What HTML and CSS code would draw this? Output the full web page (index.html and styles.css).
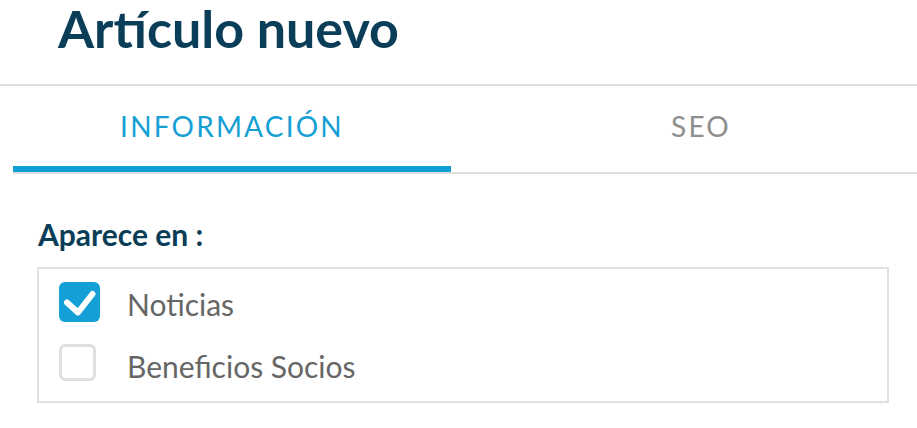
FILE: index.html
```html
<!DOCTYPE html>
<html lang="es">
<head>
<meta charset="utf-8">
<title>Artículo nuevo</title>
<link rel="stylesheet" href="styles.css">
</head>
<body>
<div class="page">
  <header class="header">
    <h1 class="title">Artículo nuevo</h1>
  </header>
  <nav class="tabs">
    <div class="tab tab-info active">INFORMACIÓN</div>
    <div class="tab tab-seo">SEO</div>
  </nav>
  <section class="content">
    <div class="label">Aparece en :</div>
    <div class="box">
      <label class="row">
        <span class="cb-wrap">
          <span class="cb checked">
            <svg width="41" height="40" viewBox="0 0 41 40"><path d="M8 20.5 L19 30.5 L33.5 12" fill="none" stroke="#fff" stroke-width="6" stroke-linecap="round" stroke-linejoin="round"/></svg>
          </span>
        </span>
        <span class="text">Noticias</span>
      </label>
      <label class="row">
        <span class="cb-wrap"><span class="cb"></span></span>
        <span class="text">Beneficios Socios</span>
      </label>
    </div>
  </section>
</div>
</body>
</html>
```
FILE: styles.css
```css
* { box-sizing: border-box; }
html, body { margin: 0; padding: 0; background: #fff; }
body { font-family: Lato, "Open Sans", sans-serif; overflow: hidden; width: 917px; height: 428px; }
.page { width: 917px; }
.header {
  height: 86px;
  padding: 2px 0 0 58px;
  border-bottom: 2px solid #dedede;
}
.title {
  margin: 0;
  font-size: 52px;
  line-height: 1;
  font-weight: 700;
  color: #0a3d57;
}
.tabs {
  display: flex;
  margin-left: 13px;
  width: 904px;
  border-bottom: 2px solid #dedede;
}
.tab {
  height: 86px;
  padding-top: 26px;
  border-bottom: 6px solid transparent;
  font-size: 28px;
  line-height: 1;
  letter-spacing: 2.2px;
  text-align: center;
  color: #8e8e8e;
}
.tab-info { flex: 0 0 438px; }
.tab-seo { flex: 0 0 500px; }
.tab.active { color: #159fd4; border-bottom-color: #129fd3; }
.content { padding: 45px 0 0 37px; }
.label {
  padding-left: 1px;
  font-size: 30px;
  line-height: 1;
  font-weight: 700;
  color: #0a3d57;
}
.box {
  margin-top: 18px;
  width: 852px;
  border: 2px solid #e0e0e0;
  padding: 13px 20px 17px 20px;
  display: flex;
  flex-direction: column;
  gap: 22px;
}
.row { display: flex; height: 40px; align-items: flex-start; gap: 27px; }
.cb-wrap { flex: 0 0 41px; }
.cb {
  display: block;
  width: 37px;
  height: 37px;
  border: 3px solid #dfdfdf;
  border-radius: 6px;
  background: #fff;
}
.cb.checked {
  width: 41px;
  height: 40px;
  border: none;
  background: #14a0d6;
  border-radius: 6px;
}
.cb svg { display: block; }
.text {
  padding-top: 7px;
  font-size: 30px;
  line-height: 1;
  color: #666;
}
```
